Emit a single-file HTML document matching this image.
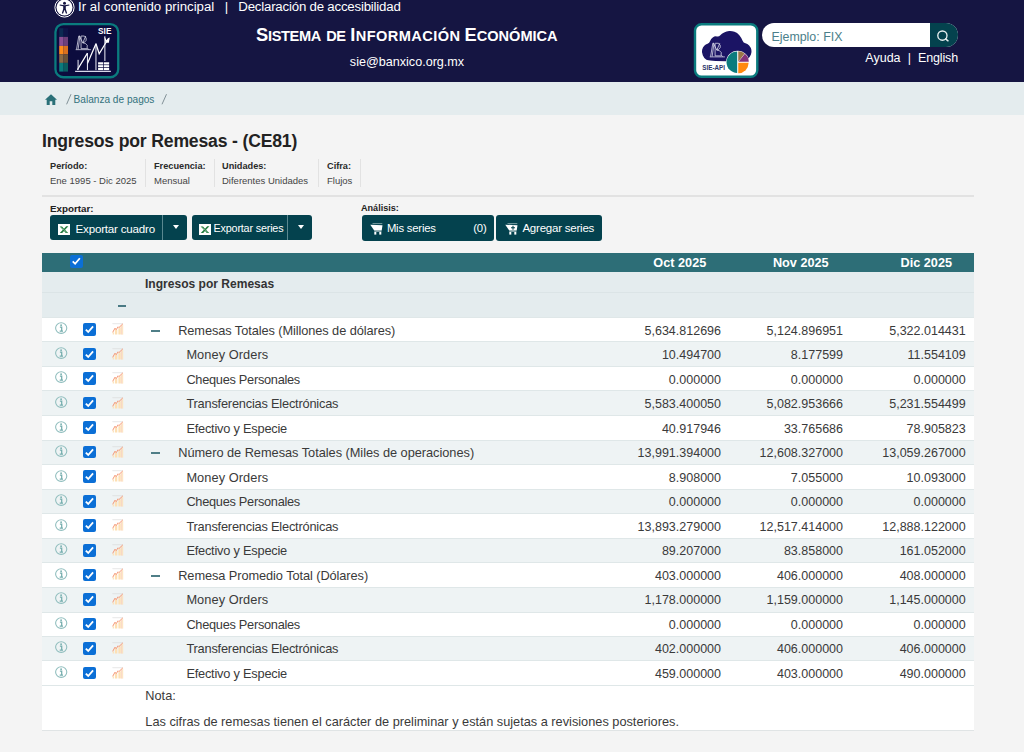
<!DOCTYPE html>
<html lang="es"><head><meta charset="utf-8"><title>SIE - Ingresos por Remesas</title>
<style>
*{box-sizing:border-box;margin:0;padding:0}
html,body{width:1024px;height:752px;overflow:hidden}
body{background:#f4f4f4;font-family:"Liberation Sans",sans-serif;color:#222;position:relative}
.abs{position:absolute}
#hdr{position:absolute;left:0;top:0;width:1024px;height:82px;background:#151542}
#hdr .t1{position:absolute;left:78px;top:-2px;font-size:13.25px;color:#fff;line-height:17px;white-space:nowrap;letter-spacing:-0.1px}
#hdr .t1 .sep{margin:0 6.5px 0 7px}
#acc{position:absolute;left:53.6px;top:-2.7px;width:21px;height:21px}
#ttl{position:absolute;left:0;top:23px;width:1024px;height:24px;color:#fff;font-weight:bold;white-space:nowrap;line-height:24px;font-size:14.6px}
#ttl .w{position:absolute;top:0;letter-spacing:0px}
#w1{left:256.1px;letter-spacing:-0.35px !important}
#w2{left:326.3px;top:1.2px !important;letter-spacing:-0.5px !important}
#w3{left:350.2px;letter-spacing:0.42px !important}
#w4{left:464.5px;letter-spacing:-0.02px !important}
#ttl b{font-size:18.3px;font-weight:bold}
#mail{position:absolute;left:207px;width:400px;top:54px;text-align:center;color:#fff;font-size:12.6px;line-height:16px}
#srch{position:absolute;left:762px;top:23px;width:196.4px;height:24.4px;border-radius:12.2px;background:#fff;overflow:hidden}
#srch .ph{position:absolute;left:9.5px;top:1.8px;line-height:25px;font-size:12.4px;color:#4b7f8a}
#srch .bt{position:absolute;right:0;top:0;width:28.4px;height:25px;background:#04424e}
#lnk{position:absolute;right:66px;top:50px;color:#fff;font-size:12.5px;line-height:16px;white-space:nowrap}
#bc{position:absolute;left:0;top:82px;width:1024px;height:33px;background:#e4ecee}
#bc .tx{position:absolute;left:73.6px;top:10.8px;font-size:10.1px;line-height:14px;color:#33727d;white-space:nowrap}
#bc .tx i{font-style:normal;color:#444;font-size:13px}
h1{position:absolute;left:42px;top:129px;font-size:17.6px;line-height:24px;color:#222;font-weight:bold;white-space:nowrap;letter-spacing:-0.17px}
.meta{position:absolute;top:159px;height:28px;font-size:9.5px;line-height:13px;color:#333;white-space:nowrap;border-right:1px solid #e2e2e2;padding-left:0}
.meta b{display:block;margin-top:0.7px;color:#2a2a2a;font-size:9.2px}
.meta span{display:block;margin-top:1.3px;color:#444}
#hr{position:absolute;left:42px;top:195px;width:932px;height:2px;background:#e2e2e2}
.lbl{position:absolute;top:202px;font-size:9.8px;font-weight:bold;line-height:13px;color:#222}
.btn{position:absolute;top:215.2px;height:25px;background:#04424e;color:#fff;font-size:11.6px;letter-spacing:-0.2px;line-height:27px;border-radius:3px;white-space:nowrap}
.sepb{position:absolute;top:215.2px;height:24.5px;background:#5a8890}
.btn svg{position:absolute}
.caret{position:absolute;left:9.9px;top:10px;width:0;height:0;border-left:3.4px solid transparent;border-right:3.4px solid transparent;border-top:4.3px solid #fff}
#tbl{position:absolute;left:42px;top:253px;width:932px;height:478px;background:#fff}
#th{position:absolute;left:0;top:0;width:932px;height:19px;background:#2d6e77;color:#fff;font-weight:bold;font-size:12.7px;line-height:20px}
#th span{position:absolute;top:0;width:110px;text-align:center}
.g{position:absolute;left:0;width:932px;background:#e4ecee;border-bottom:1px solid #dbe4e6}
.r{position:absolute;left:0;width:932px;background:#fff;font-size:12.8px;color:#3a3a3a;border-top:1px solid #dfe7e8;white-space:nowrap}
.r.odd{background:#eef3f4}
.ic{position:absolute;left:0;width:0;height:0}
.r .inf{position:absolute;left:12.7px;top:-0.8px;width:13px;height:12.4px}
.r .cb,.cb{position:absolute;left:41.2px;top:0px;width:12.6px;height:12.6px;background:#0b6fd6;border-radius:2px}
.cb svg{position:absolute;left:0;top:0;width:100%;height:100%}
.r .ch{position:absolute;left:69.8px;top:-0.1px;width:12px;height:12px}
.r .mn{position:absolute;left:109.3px;width:8.3px;height:2px;background:#4f7e87}
.r .nm{position:absolute;top:0}
.r .v{position:absolute;top:0;text-align:right;font-size:12.5px}
.note{position:absolute;left:103.3px;font-size:12.75px;color:#3a3a3a;line-height:16px;white-space:nowrap}
</style></head><body>
<div id="hdr">
<svg id="acc" viewBox="0 0 21 21"><circle cx="10.5" cy="10.5" r="9.6" fill="none" stroke="#fff" stroke-width="1"/><circle cx="10.5" cy="10.5" r="8" fill="#fff"/><circle cx="10.5" cy="6.3" r="1.5" fill="#151542"/><path d="M5.6 8.6l3.6.7v2.6l-1.4 4.4 1.2.4 1.5-4 1.5 4 1.2-.4-1.4-4.4V9.300l3.600-.7-.2-1.100-4.700.8-4.700-.8z" fill="#151542"/></svg>
<div class="t1"><span style="letter-spacing:0px">Ir al contenido principal</span><span class="sep">&nbsp;|&nbsp;</span><span style="letter-spacing:-0.2px">Declaración de accesibilidad</span></div>
<svg id="logo" viewBox="54 22 66 57" width="66" height="57" style="position:absolute;left:54px;top:22px"><rect x="55.45" y="24.05" width="62.8" height="53.2" rx="8" fill="#0c0c3e" stroke="#0a7b7e" stroke-width="2.3"/><rect x="59.2" y="28.2" width="4.4" height="8.70" fill="#0c2a52"/><rect x="63.6" y="28.2" width="4.4" height="8.70" fill="#0e1448"/><rect x="59.2" y="36.9" width="4.4" height="9.00" fill="#8a4f93"/><rect x="63.6" y="36.9" width="4.4" height="9.00" fill="#6d3f7a"/><rect x="59.2" y="45.9" width="4.4" height="8.50" fill="#ff8c1a"/><rect x="63.6" y="45.9" width="4.4" height="8.50" fill="#d9701f"/><rect x="59.2" y="54.4" width="4.4" height="8.50" fill="#8a6a45"/><rect x="63.6" y="54.4" width="4.4" height="8.50" fill="#6a5238"/><rect x="59.2" y="62.9" width="4.4" height="8.70" fill="#0a7a7c"/><rect x="63.6" y="62.9" width="4.4" height="8.70" fill="#0a5d60"/><text x="98.1" y="34.2" font-family="Liberation Sans" font-weight="bold" font-size="8.6" textLength="13.3" lengthAdjust="spacingAndGlyphs" fill="#fff">SIE</text><path d="M76.55 49.32 L78.77 36.04 L79.96 36.04 L78.09 49.32 M79.36 36.04 L82.77 42.85 L85.74 36.04 M81.06 36.04 L84.47 36.04 L86.17 38.00 L86.17 40.30 L84.47 42.26 L82.77 42.85 L85.32 43.36 L87.28 45.40 L87.02 47.79 L88.72 49.32 M81.06 36.30 L81.06 48.64 L87.45 48.64 M75.70 49.66 L90.85 49.66" fill="none" stroke="#e4e4f2" stroke-width="0.75"/><path d="M75.11 71.36 L110.85 71.36" stroke="#d8d8ea" stroke-width="1.1" fill="none"/><path d="M77.40 69.74 L87.45 53.06 M87.45 63.53 L95.96 43.70 M95.96 43.70 L99.19 53.74 L108.72 38.00" fill="none" stroke="#fff" stroke-width="1.25" stroke-linejoin="miter"/><path d="M78.09 59.87 L78.09 69.91 M87.45 53.06 L87.45 70.09 M95.96 43.70 L95.96 70.09 M104.89 36.30 L104.89 60.98" fill="none" stroke="#f0f0fa" stroke-width="1"/><path d="M104.30 36.30 L106.60 40.30 L109.74 37.15 L108.89 42.85 L105.49 42.85z" fill="#fff"/><rect x="98.09" y="62.26" width="5.10" height="2.21" fill="#fff"/><rect x="103.87" y="62.26" width="5.28" height="2.21" fill="#fff"/><rect x="98.09" y="65.15" width="5.10" height="2.04" fill="#fff"/><rect x="103.87" y="65.15" width="5.28" height="2.04" fill="#fff"/><rect x="98.09" y="67.87" width="5.10" height="2.22" fill="#fff"/><rect x="103.87" y="67.87" width="5.28" height="2.22" fill="#fff"/></svg>
<div id="ttl"><span class="w" id="w1"><b>S</b>ISTEMA</span><span class="w" id="w2">DE</span><span class="w" id="w3"><b>I</b>NFORMACIÓN</span><span class="w" id="w4"><b>E</b>CONÓMICA</span></div>
<div id="mail">sie@banxico.org.mx</div>
<svg id="api" viewBox="693 22 67 57" width="67" height="57" style="position:absolute;left:693px;top:22px"><rect x="695" y="24.3" width="62.3" height="52.5" rx="6.5" fill="#fff" stroke="#0a7b7e" stroke-width="2.4"/><path d="M702.77 55.23Q701.49 52.04 702.13 49.70Q702.77 47.36 704.26 45.87Q705.74 44.38 707.57 43.87Q709.40 43.36 710.13 41.11Q710.85 38.85 712.77 37.45Q714.68 36.04 716.81 36.47Q718.94 36.89 720.30 35.32Q721.66 33.74 724.13 32.47Q726.60 31.19 729.15 30.98Q731.70 30.77 734.47 31.70Q737.23 32.64 739.36 35.32Q741.49 38.00 742.47 40.43Q743.45 42.85 745.45 43.19Q747.45 43.53 749.15 45.45Q750.85 47.36 751.36 49.70Q751.87 52.04 750.94 54.60Q750.00 57.15 747.66 59.15Q745.32 61.15 727.02 61.15Q708.72 61.15 706.38 59.79Q704.04 58.43 702.77 55.23z" fill="#1b1464"/><path d="M710.60 56.55 L712.81 43.28 L714.00 43.28 L712.13 56.55 M713.40 43.28 L716.81 50.09 L719.79 43.28 M715.11 43.28 L718.51 43.28 L720.21 45.23 L720.21 47.53 L718.51 49.49 L716.81 50.09 L719.36 50.60 L721.32 52.64 L721.06 55.02 L722.77 56.55 M715.11 43.53 L715.11 55.87 L721.49 55.87 M709.74 56.89 L724.89 56.89" fill="none" stroke="#e4e4f2" stroke-width="0.75"/><circle cx="737.66" cy="62.26" r="11.54" fill="#fff"/><path d="M737.16 62.26L737.16 72.90A10.64 10.64 0 0 1 737.16 51.62z" fill="#0b7c7e"/><path d="M738.26 61.66L738.26 51.32A10.34 10.34 0 0 1 744.62 53.51z" fill="#9a7648"/><path d="M738.56 61.86L744.86 53.79A10.24 10.24 0 0 1 748.80 61.86z" fill="#85337a"/><path d="M738.26 62.86L748.60 62.86A10.34 10.34 0 0 1 738.26 73.20z" fill="#ff8a0f"/><text x="702.34" y="70.09" font-family="Liberation Sans" font-weight="bold" font-size="7.3" textLength="22.6" lengthAdjust="spacingAndGlyphs" fill="#2a3568">SIE-API</text></svg>
<div id="srch"><span class="ph">Ejemplo: FIX</span><div class="bt"><svg viewBox="0 0 14 14" width="14" height="14" style="position:absolute;left:5.8px;top:5.9px"><circle cx="6.400" cy="6.600" r="4.600" fill="none" stroke="#e8f0f0" stroke-width="1.350"/><path d="M9.600 9.900l2.400 1.900" stroke="#e8f0f0" stroke-width="1.500" stroke-linecap="round"/></svg></div></div>
<div id="lnk"><span>Ayuda</span><span style="margin:0 6.9px 0 7.3px">|</span><span style="letter-spacing:-0.14px">English</span></div>
</div>
<div id="bc"><svg viewBox="0 0 12 11" width="12" height="11" style="position:absolute;left:45.3px;top:11.8px"><path d="M6 0.300L0 5.800h1.700V11h3V7.300h2.600V11h3V5.800H12z" fill="#2a7078"/></svg>
<svg viewBox="0 0 110 14" width="110" height="14" style="position:absolute;left:62px;top:9px"><path d="M4.600 13.300L9 3.200M100 13.300L104.500 3.200" stroke="#6f7f86" stroke-width="0.850" fill="none"/></svg><div class="tx">Balanza de pagos</div></div>
<h1>Ingresos por Remesas - (CE81)</h1>
<div class="meta" style="left:50px;width:96px"><b>Período:</b><span>Ene 1995 - Dic 2025</span></div>
<div class="meta" style="left:154px;width:60.5px"><b>Frecuencia:</b><span>Mensual</span></div>
<div class="meta" style="left:222px;width:97px"><b>Unidades:</b><span>Diferentes Unidades</span></div>
<div class="meta" style="left:327px;width:34px"><b>Cifra:</b><span>Flujos</span></div>
<div id="hr"></div>
<div class="lbl" style="left:50px">Exportar:</div>
<div class="lbl" style="left:361px;font-size:9.1px">Análisis:</div>
<div class="sepb" style="left:161px;width:4px"></div><div class="sepb" style="left:286px;width:4px"></div><div class="btn" style="left:50px;width:112.200px;height:24.500px;border-radius:3px 0 0 3px"><svg viewBox="0 0 12 11" width="12" height="11" style="left:8.3px;top:8.7px"><rect x="0" y="0" width="12" height="11" fill="#fff"/><path d="M1.6 2.600L4 2.600L6 4.800L8.200 2.300L10.400 2.300L7.100 5.800L10.200 9H7.800L6 6.900L4.200 9H1.800L4.900 5.700z" fill="#1e7a3c"/><path d="M2.600 3.200L9.300 8.600" stroke="#bfe0c8" stroke-width="0.5"/></svg><span style="position:absolute;left:25.500px">Exportar cuadro</span></div>
<div class="btn" style="left:163.300px;width:23.500px;height:24.500px;border-radius:0 3px 3px 0"><div class="caret"></div></div>
<div class="btn" style="left:192px;width:95.200px;height:24.500px;border-radius:3px 0 0 3px"><svg viewBox="0 0 12 11" width="12" height="11" style="left:6.6px;top:8.7px"><rect x="0" y="0" width="12" height="11" fill="#fff"/><path d="M1.6 2.600L4 2.600L6 4.800L8.200 2.300L10.400 2.300L7.100 5.800L10.200 9H7.800L6 6.900L4.200 9H1.800L4.900 5.700z" fill="#1e7a3c"/><path d="M2.600 3.200L9.300 8.600" stroke="#bfe0c8" stroke-width="0.5"/></svg><span style="position:absolute;left:21.500px;font-size:10.800px;letter-spacing:-0.180px">Exportar series</span></div>
<div class="btn" style="left:288.300px;width:23.500px;height:24.500px;border-radius:0 3px 3px 0"><div class="caret"></div></div>
<div class="btn" style="left:361.500px;width:132.500px;height:25.500px"><svg viewBox="0 0 13 12" width="13" height="12" style="left:8.2px;top:8px"><path d="M2.500 0.600H12.300" stroke="#a9c3c7" stroke-width="0.700"/><path d="M0.300 1.700L12.500 2.200L11.700 7.400H4.200z" fill="#fff"/><path d="M4.300 8.200H11.500" stroke="#dfeaeb" stroke-width="0.800"/><rect x="4.300" y="9" width="2" height="2.600" fill="#fff"/><rect x="9.300" y="9" width="2" height="2.600" fill="#fff"/></svg><span style="position:absolute;left:25.400px;font-size:11.300px;letter-spacing:-0.200px">Mis series</span><span style="position:absolute;right:7.500px;font-size:11.300px">(0)</span></div>
<div class="btn" style="left:496.400px;width:105.500px;height:25.500px"><svg viewBox="0 0 13 12" width="13" height="12" style="left:8.4px;top:8px"><path d="M2.500 0.600H12.300" stroke="#a9c3c7" stroke-width="0.700"/><path d="M0.300 1.700L12.500 2.200L11.700 7.400H4.200z" fill="#fff"/><path d="M4.300 8.200H11.500" stroke="#dfeaeb" stroke-width="0.800"/><rect x="4.300" y="9" width="2" height="2.600" fill="#fff"/><rect x="9.300" y="9" width="2" height="2.600" fill="#fff"/><path d="M8 2.800v4M6 4.800h4" stroke="#04424e" stroke-width="1.100"/></svg><span style="position:absolute;left:26px;font-size:11.500px;letter-spacing:-0.220px">Agregar series</span></div>
<div id="tbl">
<div id="th"><span class="cb" style="left:28.3px;top:2.3px;width:12.3px;height:12.3px"><svg viewBox="0 0 13 13"><path d="M2.900 6.800l2.500 2.500L10.400 3.400" fill="none" stroke="#fff" stroke-width="1.900"/></svg></span><span style="left:582.8px">Oct 2025</span><span style="left:703.8px">Nov 2025</span><span style="left:829.3px">Dic 2025</span></div>
<div class="g" style="top:19px;height:21px"><span style="position:absolute;left:103px;top:3.500px;font-size:12.050px;font-weight:bold;color:#333;line-height:16px;white-space:nowrap">Ingresos por Remesas</span></div>
<div class="g" style="top:40px;height:24px;border-bottom:none"><span style="position:absolute;left:75.800px;top:11.900px;width:8.400px;height:1.900px;background:#4a7a84"></span></div>
<div class="r" style="top:64px;height:24px;line-height:16px"><span class="ic" style="top:5.20px"><svg class="inf" viewBox="0 0 13 12.4"><ellipse cx="6.2" cy="6.1" rx="5.6" ry="5.3" fill="none" stroke="#8fbdbd" stroke-width="1.05"/><path d="M4.900 5.100h1.800v4M4.700 9.200h3.300" fill="none" stroke="#74adad" stroke-width="1.250"/><circle cx="6.100" cy="3.200" r="0.850" fill="#74adad"/></svg><span class="cb"><svg viewBox="0 0 13 13"><path d="M2.900 6.800l2.500 2.500L10.400 3.400" fill="none" stroke="#fff" stroke-width="1.900"/></svg></span><svg class="ch" viewBox="0 0 12 12"><path d="M0.400 0.700h10.400" stroke="#d6d6d6" stroke-width="0.600" fill="none"/><path d="M1.300 11.600V9.200M3.500 11.600V6.500M4.700 11.600V6.800M7 11.600V5.200M8.200 11.600V4.200" fill="none" stroke="#fde0b4" stroke-width="1.200"/><path d="M9.700 11.600V2.800" fill="none" stroke="#f9cdb4" stroke-width="0.900"/><path d="M10.700 11.600V1.800" fill="none" stroke="#fde0b4" stroke-width="0.900"/><path d="M0.700 9.300L3 5.200l1.200 1.500L6.100 3.800l0.800 0.800L10.800 0.900" fill="none" stroke="#f4926f" stroke-width="0.950"/></svg></span><span class="mn" style="top:12px"></span><span class="nm" style="top:5px;left:136.2px;letter-spacing:-0.089px">Remesas Totales (Millones de dólares)</span><span class="v" style="top:5px;right:253.0px">5,634.812696</span><span class="v" style="top:5px;right:131.0px">5,124.896951</span><span class="v" style="top:5px;right:8.3px">5,322.014431</span></div>
<div class="r odd" style="top:88px;height:25px;line-height:16px"><span class="ic" style="top:5.73px"><svg class="inf" viewBox="0 0 13 12.4"><ellipse cx="6.2" cy="6.1" rx="5.6" ry="5.3" fill="none" stroke="#8fbdbd" stroke-width="1.05"/><path d="M4.900 5.100h1.800v4M4.700 9.200h3.300" fill="none" stroke="#74adad" stroke-width="1.250"/><circle cx="6.100" cy="3.200" r="0.850" fill="#74adad"/></svg><span class="cb"><svg viewBox="0 0 13 13"><path d="M2.900 6.800l2.500 2.500L10.400 3.400" fill="none" stroke="#fff" stroke-width="1.900"/></svg></span><svg class="ch" viewBox="0 0 12 12"><path d="M0.400 0.700h10.400" stroke="#d6d6d6" stroke-width="0.600" fill="none"/><path d="M1.300 11.600V9.200M3.500 11.600V6.500M4.700 11.600V6.800M7 11.600V5.200M8.200 11.600V4.200" fill="none" stroke="#fde0b4" stroke-width="1.200"/><path d="M9.700 11.600V2.800" fill="none" stroke="#f9cdb4" stroke-width="0.900"/><path d="M10.700 11.600V1.800" fill="none" stroke="#fde0b4" stroke-width="0.900"/><path d="M0.700 9.300L3 5.200l1.200 1.500L6.100 3.800l0.800 0.800L10.800 0.900" fill="none" stroke="#f4926f" stroke-width="0.950"/></svg></span><span class="nm" style="top:5px;left:144.4px;letter-spacing:0.067px">Money Orders</span><span class="v" style="top:5px;right:253.0px">10.494700</span><span class="v" style="top:5px;right:131.0px">8.177599</span><span class="v" style="top:5px;right:8.3px">11.554109</span></div>
<div class="r" style="top:113px;height:24px;line-height:16px"><span class="ic" style="top:5.26px"><svg class="inf" viewBox="0 0 13 12.4"><ellipse cx="6.2" cy="6.1" rx="5.6" ry="5.3" fill="none" stroke="#8fbdbd" stroke-width="1.05"/><path d="M4.900 5.100h1.800v4M4.700 9.200h3.300" fill="none" stroke="#74adad" stroke-width="1.250"/><circle cx="6.100" cy="3.200" r="0.850" fill="#74adad"/></svg><span class="cb"><svg viewBox="0 0 13 13"><path d="M2.900 6.800l2.500 2.500L10.400 3.400" fill="none" stroke="#fff" stroke-width="1.900"/></svg></span><svg class="ch" viewBox="0 0 12 12"><path d="M0.400 0.700h10.400" stroke="#d6d6d6" stroke-width="0.600" fill="none"/><path d="M1.300 11.600V9.200M3.500 11.600V6.500M4.700 11.600V6.800M7 11.600V5.200M8.200 11.600V4.200" fill="none" stroke="#fde0b4" stroke-width="1.200"/><path d="M9.700 11.600V2.800" fill="none" stroke="#f9cdb4" stroke-width="0.900"/><path d="M10.700 11.600V1.800" fill="none" stroke="#fde0b4" stroke-width="0.900"/><path d="M0.700 9.300L3 5.200l1.200 1.500L6.100 3.800l0.800 0.800L10.800 0.900" fill="none" stroke="#f4926f" stroke-width="0.950"/></svg></span><span class="nm" style="top:5px;left:144.4px;letter-spacing:-0.291px">Cheques Personales</span><span class="v" style="top:5px;right:253.0px">0.000000</span><span class="v" style="top:5px;right:131.0px">0.000000</span><span class="v" style="top:5px;right:8.3px">0.000000</span></div>
<div class="r odd" style="top:137px;height:25px;line-height:16px"><span class="ic" style="top:5.79px"><svg class="inf" viewBox="0 0 13 12.4"><ellipse cx="6.2" cy="6.1" rx="5.6" ry="5.3" fill="none" stroke="#8fbdbd" stroke-width="1.05"/><path d="M4.900 5.100h1.800v4M4.700 9.200h3.300" fill="none" stroke="#74adad" stroke-width="1.250"/><circle cx="6.100" cy="3.200" r="0.850" fill="#74adad"/></svg><span class="cb"><svg viewBox="0 0 13 13"><path d="M2.900 6.800l2.500 2.500L10.400 3.400" fill="none" stroke="#fff" stroke-width="1.900"/></svg></span><svg class="ch" viewBox="0 0 12 12"><path d="M0.400 0.700h10.400" stroke="#d6d6d6" stroke-width="0.600" fill="none"/><path d="M1.300 11.600V9.200M3.500 11.600V6.500M4.700 11.600V6.800M7 11.600V5.200M8.200 11.600V4.200" fill="none" stroke="#fde0b4" stroke-width="1.200"/><path d="M9.700 11.600V2.800" fill="none" stroke="#f9cdb4" stroke-width="0.900"/><path d="M10.700 11.600V1.800" fill="none" stroke="#fde0b4" stroke-width="0.900"/><path d="M0.700 9.300L3 5.200l1.200 1.500L6.100 3.800l0.800 0.800L10.800 0.900" fill="none" stroke="#f4926f" stroke-width="0.950"/></svg></span><span class="nm" style="top:5px;left:144.4px;letter-spacing:-0.206px">Transferencias Electrónicas</span><span class="v" style="top:5px;right:253.0px">5,583.400050</span><span class="v" style="top:5px;right:131.0px">5,082.953666</span><span class="v" style="top:5px;right:8.3px">5,231.554499</span></div>
<div class="r" style="top:162px;height:25px;line-height:16px"><span class="ic" style="top:5.32px"><svg class="inf" viewBox="0 0 13 12.4"><ellipse cx="6.2" cy="6.1" rx="5.6" ry="5.3" fill="none" stroke="#8fbdbd" stroke-width="1.05"/><path d="M4.900 5.100h1.800v4M4.700 9.200h3.300" fill="none" stroke="#74adad" stroke-width="1.250"/><circle cx="6.100" cy="3.200" r="0.850" fill="#74adad"/></svg><span class="cb"><svg viewBox="0 0 13 13"><path d="M2.900 6.800l2.500 2.500L10.400 3.400" fill="none" stroke="#fff" stroke-width="1.900"/></svg></span><svg class="ch" viewBox="0 0 12 12"><path d="M0.400 0.700h10.400" stroke="#d6d6d6" stroke-width="0.600" fill="none"/><path d="M1.300 11.600V9.200M3.500 11.600V6.500M4.700 11.600V6.800M7 11.600V5.200M8.200 11.600V4.200" fill="none" stroke="#fde0b4" stroke-width="1.200"/><path d="M9.700 11.600V2.800" fill="none" stroke="#f9cdb4" stroke-width="0.900"/><path d="M10.700 11.600V1.800" fill="none" stroke="#fde0b4" stroke-width="0.900"/><path d="M0.700 9.300L3 5.200l1.200 1.500L6.100 3.800l0.800 0.800L10.800 0.900" fill="none" stroke="#f4926f" stroke-width="0.950"/></svg></span><span class="nm" style="top:5px;left:144.4px;letter-spacing:-0.221px">Efectivo y Especie</span><span class="v" style="top:5px;right:253.0px">40.917946</span><span class="v" style="top:5px;right:131.0px">33.765686</span><span class="v" style="top:5px;right:8.3px">78.905823</span></div>
<div class="r odd" style="top:187px;height:24px;line-height:16px"><span class="ic" style="top:4.85px"><svg class="inf" viewBox="0 0 13 12.4"><ellipse cx="6.2" cy="6.1" rx="5.6" ry="5.3" fill="none" stroke="#8fbdbd" stroke-width="1.05"/><path d="M4.900 5.100h1.800v4M4.700 9.200h3.300" fill="none" stroke="#74adad" stroke-width="1.250"/><circle cx="6.100" cy="3.200" r="0.850" fill="#74adad"/></svg><span class="cb"><svg viewBox="0 0 13 13"><path d="M2.900 6.800l2.500 2.500L10.400 3.400" fill="none" stroke="#fff" stroke-width="1.900"/></svg></span><svg class="ch" viewBox="0 0 12 12"><path d="M0.400 0.700h10.400" stroke="#d6d6d6" stroke-width="0.600" fill="none"/><path d="M1.300 11.600V9.200M3.500 11.600V6.500M4.700 11.600V6.800M7 11.600V5.200M8.200 11.600V4.200" fill="none" stroke="#fde0b4" stroke-width="1.200"/><path d="M9.700 11.600V2.800" fill="none" stroke="#f9cdb4" stroke-width="0.900"/><path d="M10.700 11.600V1.800" fill="none" stroke="#fde0b4" stroke-width="0.900"/><path d="M0.700 9.300L3 5.200l1.200 1.500L6.100 3.800l0.800 0.800L10.800 0.900" fill="none" stroke="#f4926f" stroke-width="0.950"/></svg></span><span class="mn" style="top:11px"></span><span class="nm" style="top:4px;left:136.2px;letter-spacing:-0.039px">Número de Remesas Totales (Miles de operaciones)</span><span class="v" style="top:4px;right:253.0px">13,991.394000</span><span class="v" style="top:4px;right:131.0px">12,608.327000</span><span class="v" style="top:4px;right:8.3px">13,059.267000</span></div>
<div class="r" style="top:211px;height:25px;line-height:16px"><span class="ic" style="top:5.38px"><svg class="inf" viewBox="0 0 13 12.4"><ellipse cx="6.2" cy="6.1" rx="5.6" ry="5.3" fill="none" stroke="#8fbdbd" stroke-width="1.05"/><path d="M4.900 5.100h1.800v4M4.700 9.200h3.300" fill="none" stroke="#74adad" stroke-width="1.250"/><circle cx="6.100" cy="3.200" r="0.850" fill="#74adad"/></svg><span class="cb"><svg viewBox="0 0 13 13"><path d="M2.900 6.800l2.500 2.500L10.400 3.400" fill="none" stroke="#fff" stroke-width="1.900"/></svg></span><svg class="ch" viewBox="0 0 12 12"><path d="M0.400 0.700h10.400" stroke="#d6d6d6" stroke-width="0.600" fill="none"/><path d="M1.300 11.600V9.200M3.500 11.600V6.500M4.700 11.600V6.800M7 11.600V5.200M8.200 11.600V4.200" fill="none" stroke="#fde0b4" stroke-width="1.200"/><path d="M9.700 11.600V2.800" fill="none" stroke="#f9cdb4" stroke-width="0.900"/><path d="M10.700 11.600V1.800" fill="none" stroke="#fde0b4" stroke-width="0.900"/><path d="M0.700 9.300L3 5.200l1.200 1.500L6.100 3.800l0.800 0.800L10.800 0.900" fill="none" stroke="#f4926f" stroke-width="0.950"/></svg></span><span class="nm" style="top:5px;left:144.4px;letter-spacing:0.067px">Money Orders</span><span class="v" style="top:5px;right:253.0px">8.908000</span><span class="v" style="top:5px;right:131.0px">7.055000</span><span class="v" style="top:5px;right:8.3px">10.093000</span></div>
<div class="r odd" style="top:236px;height:24px;line-height:16px"><span class="ic" style="top:4.91px"><svg class="inf" viewBox="0 0 13 12.4"><ellipse cx="6.2" cy="6.1" rx="5.6" ry="5.3" fill="none" stroke="#8fbdbd" stroke-width="1.05"/><path d="M4.900 5.100h1.800v4M4.700 9.200h3.300" fill="none" stroke="#74adad" stroke-width="1.250"/><circle cx="6.100" cy="3.200" r="0.850" fill="#74adad"/></svg><span class="cb"><svg viewBox="0 0 13 13"><path d="M2.900 6.800l2.500 2.500L10.400 3.400" fill="none" stroke="#fff" stroke-width="1.900"/></svg></span><svg class="ch" viewBox="0 0 12 12"><path d="M0.400 0.700h10.400" stroke="#d6d6d6" stroke-width="0.600" fill="none"/><path d="M1.300 11.600V9.200M3.500 11.600V6.500M4.700 11.600V6.800M7 11.600V5.200M8.200 11.600V4.200" fill="none" stroke="#fde0b4" stroke-width="1.200"/><path d="M9.700 11.600V2.800" fill="none" stroke="#f9cdb4" stroke-width="0.900"/><path d="M10.700 11.600V1.800" fill="none" stroke="#fde0b4" stroke-width="0.900"/><path d="M0.700 9.300L3 5.200l1.200 1.500L6.100 3.800l0.800 0.800L10.800 0.900" fill="none" stroke="#f4926f" stroke-width="0.950"/></svg></span><span class="nm" style="top:4px;left:144.4px;letter-spacing:-0.291px">Cheques Personales</span><span class="v" style="top:4px;right:253.0px">0.000000</span><span class="v" style="top:4px;right:131.0px">0.000000</span><span class="v" style="top:4px;right:8.3px">0.000000</span></div>
<div class="r" style="top:260px;height:25px;line-height:16px"><span class="ic" style="top:5.44px"><svg class="inf" viewBox="0 0 13 12.4"><ellipse cx="6.2" cy="6.1" rx="5.6" ry="5.3" fill="none" stroke="#8fbdbd" stroke-width="1.05"/><path d="M4.900 5.100h1.800v4M4.700 9.200h3.300" fill="none" stroke="#74adad" stroke-width="1.250"/><circle cx="6.100" cy="3.200" r="0.850" fill="#74adad"/></svg><span class="cb"><svg viewBox="0 0 13 13"><path d="M2.900 6.800l2.500 2.500L10.400 3.400" fill="none" stroke="#fff" stroke-width="1.900"/></svg></span><svg class="ch" viewBox="0 0 12 12"><path d="M0.400 0.700h10.400" stroke="#d6d6d6" stroke-width="0.600" fill="none"/><path d="M1.300 11.600V9.200M3.500 11.600V6.500M4.700 11.600V6.800M7 11.600V5.200M8.200 11.600V4.200" fill="none" stroke="#fde0b4" stroke-width="1.200"/><path d="M9.700 11.600V2.800" fill="none" stroke="#f9cdb4" stroke-width="0.900"/><path d="M10.700 11.600V1.800" fill="none" stroke="#fde0b4" stroke-width="0.900"/><path d="M0.700 9.300L3 5.200l1.200 1.500L6.100 3.800l0.800 0.800L10.800 0.900" fill="none" stroke="#f4926f" stroke-width="0.950"/></svg></span><span class="nm" style="top:5px;left:144.4px;letter-spacing:-0.206px">Transferencias Electrónicas</span><span class="v" style="top:5px;right:253.0px">13,893.279000</span><span class="v" style="top:5px;right:131.0px">12,517.414000</span><span class="v" style="top:5px;right:8.3px">12,888.122000</span></div>
<div class="r odd" style="top:285px;height:24px;line-height:16px"><span class="ic" style="top:4.97px"><svg class="inf" viewBox="0 0 13 12.4"><ellipse cx="6.2" cy="6.1" rx="5.6" ry="5.3" fill="none" stroke="#8fbdbd" stroke-width="1.05"/><path d="M4.900 5.100h1.800v4M4.700 9.200h3.300" fill="none" stroke="#74adad" stroke-width="1.250"/><circle cx="6.100" cy="3.200" r="0.850" fill="#74adad"/></svg><span class="cb"><svg viewBox="0 0 13 13"><path d="M2.900 6.800l2.500 2.500L10.400 3.400" fill="none" stroke="#fff" stroke-width="1.900"/></svg></span><svg class="ch" viewBox="0 0 12 12"><path d="M0.400 0.700h10.400" stroke="#d6d6d6" stroke-width="0.600" fill="none"/><path d="M1.300 11.600V9.200M3.500 11.600V6.500M4.700 11.600V6.800M7 11.600V5.200M8.200 11.600V4.200" fill="none" stroke="#fde0b4" stroke-width="1.200"/><path d="M9.700 11.600V2.800" fill="none" stroke="#f9cdb4" stroke-width="0.900"/><path d="M10.700 11.600V1.800" fill="none" stroke="#fde0b4" stroke-width="0.900"/><path d="M0.700 9.300L3 5.200l1.200 1.500L6.100 3.800l0.800 0.800L10.800 0.900" fill="none" stroke="#f4926f" stroke-width="0.950"/></svg></span><span class="nm" style="top:4px;left:144.4px;letter-spacing:-0.221px">Efectivo y Especie</span><span class="v" style="top:4px;right:253.0px">89.207000</span><span class="v" style="top:4px;right:131.0px">83.858000</span><span class="v" style="top:4px;right:8.3px">161.052000</span></div>
<div class="r" style="top:309px;height:25px;line-height:16px"><span class="ic" style="top:5.50px"><svg class="inf" viewBox="0 0 13 12.4"><ellipse cx="6.2" cy="6.1" rx="5.6" ry="5.3" fill="none" stroke="#8fbdbd" stroke-width="1.05"/><path d="M4.900 5.100h1.800v4M4.700 9.200h3.300" fill="none" stroke="#74adad" stroke-width="1.250"/><circle cx="6.100" cy="3.200" r="0.850" fill="#74adad"/></svg><span class="cb"><svg viewBox="0 0 13 13"><path d="M2.900 6.800l2.500 2.500L10.400 3.400" fill="none" stroke="#fff" stroke-width="1.900"/></svg></span><svg class="ch" viewBox="0 0 12 12"><path d="M0.400 0.700h10.400" stroke="#d6d6d6" stroke-width="0.600" fill="none"/><path d="M1.300 11.600V9.200M3.500 11.600V6.500M4.700 11.600V6.800M7 11.600V5.200M8.200 11.600V4.200" fill="none" stroke="#fde0b4" stroke-width="1.200"/><path d="M9.700 11.600V2.800" fill="none" stroke="#f9cdb4" stroke-width="0.900"/><path d="M10.700 11.600V1.800" fill="none" stroke="#fde0b4" stroke-width="0.900"/><path d="M0.700 9.300L3 5.200l1.200 1.500L6.100 3.800l0.800 0.800L10.800 0.900" fill="none" stroke="#f4926f" stroke-width="0.950"/></svg></span><span class="mn" style="top:12px"></span><span class="nm" style="top:5px;left:136.2px;letter-spacing:-0.085px">Remesa Promedio Total (Dólares)</span><span class="v" style="top:5px;right:253.0px">403.000000</span><span class="v" style="top:5px;right:131.0px">406.000000</span><span class="v" style="top:5px;right:8.3px">408.000000</span></div>
<div class="r odd" style="top:334px;height:25px;line-height:16px"><span class="ic" style="top:5.03px"><svg class="inf" viewBox="0 0 13 12.4"><ellipse cx="6.2" cy="6.1" rx="5.6" ry="5.3" fill="none" stroke="#8fbdbd" stroke-width="1.05"/><path d="M4.900 5.100h1.800v4M4.700 9.200h3.300" fill="none" stroke="#74adad" stroke-width="1.250"/><circle cx="6.100" cy="3.200" r="0.850" fill="#74adad"/></svg><span class="cb"><svg viewBox="0 0 13 13"><path d="M2.900 6.800l2.500 2.500L10.400 3.400" fill="none" stroke="#fff" stroke-width="1.900"/></svg></span><svg class="ch" viewBox="0 0 12 12"><path d="M0.400 0.700h10.400" stroke="#d6d6d6" stroke-width="0.600" fill="none"/><path d="M1.300 11.600V9.200M3.500 11.600V6.500M4.700 11.600V6.800M7 11.600V5.200M8.200 11.600V4.200" fill="none" stroke="#fde0b4" stroke-width="1.200"/><path d="M9.700 11.600V2.800" fill="none" stroke="#f9cdb4" stroke-width="0.900"/><path d="M10.700 11.600V1.800" fill="none" stroke="#fde0b4" stroke-width="0.900"/><path d="M0.700 9.300L3 5.200l1.200 1.500L6.100 3.800l0.800 0.800L10.800 0.900" fill="none" stroke="#f4926f" stroke-width="0.950"/></svg></span><span class="nm" style="top:4px;left:144.4px;letter-spacing:0.067px">Money Orders</span><span class="v" style="top:4px;right:253.0px">1,178.000000</span><span class="v" style="top:4px;right:131.0px">1,159.000000</span><span class="v" style="top:4px;right:8.3px">1,145.000000</span></div>
<div class="r" style="top:359px;height:24px;line-height:16px"><span class="ic" style="top:4.56px"><svg class="inf" viewBox="0 0 13 12.4"><ellipse cx="6.2" cy="6.1" rx="5.6" ry="5.3" fill="none" stroke="#8fbdbd" stroke-width="1.05"/><path d="M4.900 5.100h1.800v4M4.700 9.200h3.300" fill="none" stroke="#74adad" stroke-width="1.250"/><circle cx="6.100" cy="3.200" r="0.850" fill="#74adad"/></svg><span class="cb"><svg viewBox="0 0 13 13"><path d="M2.900 6.800l2.500 2.500L10.400 3.400" fill="none" stroke="#fff" stroke-width="1.900"/></svg></span><svg class="ch" viewBox="0 0 12 12"><path d="M0.400 0.700h10.400" stroke="#d6d6d6" stroke-width="0.600" fill="none"/><path d="M1.300 11.600V9.200M3.500 11.600V6.500M4.700 11.600V6.800M7 11.600V5.200M8.200 11.600V4.200" fill="none" stroke="#fde0b4" stroke-width="1.200"/><path d="M9.700 11.600V2.800" fill="none" stroke="#f9cdb4" stroke-width="0.900"/><path d="M10.700 11.600V1.800" fill="none" stroke="#fde0b4" stroke-width="0.900"/><path d="M0.700 9.300L3 5.200l1.200 1.500L6.100 3.800l0.800 0.800L10.800 0.900" fill="none" stroke="#f4926f" stroke-width="0.950"/></svg></span><span class="nm" style="top:4px;left:144.4px;letter-spacing:-0.291px">Cheques Personales</span><span class="v" style="top:4px;right:253.0px">0.000000</span><span class="v" style="top:4px;right:131.0px">0.000000</span><span class="v" style="top:4px;right:8.3px">0.000000</span></div>
<div class="r odd" style="top:383px;height:24px;line-height:16px"><span class="ic" style="top:5.09px"><svg class="inf" viewBox="0 0 13 12.4"><ellipse cx="6.2" cy="6.1" rx="5.6" ry="5.3" fill="none" stroke="#8fbdbd" stroke-width="1.05"/><path d="M4.900 5.100h1.800v4M4.700 9.200h3.300" fill="none" stroke="#74adad" stroke-width="1.250"/><circle cx="6.100" cy="3.200" r="0.850" fill="#74adad"/></svg><span class="cb"><svg viewBox="0 0 13 13"><path d="M2.900 6.800l2.500 2.500L10.400 3.400" fill="none" stroke="#fff" stroke-width="1.900"/></svg></span><svg class="ch" viewBox="0 0 12 12"><path d="M0.400 0.700h10.400" stroke="#d6d6d6" stroke-width="0.600" fill="none"/><path d="M1.300 11.600V9.200M3.500 11.600V6.500M4.700 11.600V6.800M7 11.600V5.200M8.200 11.600V4.200" fill="none" stroke="#fde0b4" stroke-width="1.200"/><path d="M9.700 11.600V2.800" fill="none" stroke="#f9cdb4" stroke-width="0.900"/><path d="M10.700 11.600V1.800" fill="none" stroke="#fde0b4" stroke-width="0.900"/><path d="M0.700 9.300L3 5.200l1.200 1.500L6.100 3.800l0.800 0.800L10.800 0.900" fill="none" stroke="#f4926f" stroke-width="0.950"/></svg></span><span class="nm" style="top:4px;left:144.4px;letter-spacing:-0.206px">Transferencias Electrónicas</span><span class="v" style="top:4px;right:253.0px">402.000000</span><span class="v" style="top:4px;right:131.0px">406.000000</span><span class="v" style="top:4px;right:8.3px">406.000000</span></div>
<div class="r" style="top:407px;height:25px;line-height:16px"><span class="ic" style="top:5.62px"><svg class="inf" viewBox="0 0 13 12.4"><ellipse cx="6.2" cy="6.1" rx="5.6" ry="5.3" fill="none" stroke="#8fbdbd" stroke-width="1.05"/><path d="M4.900 5.100h1.800v4M4.700 9.200h3.300" fill="none" stroke="#74adad" stroke-width="1.250"/><circle cx="6.100" cy="3.200" r="0.850" fill="#74adad"/></svg><span class="cb"><svg viewBox="0 0 13 13"><path d="M2.900 6.800l2.500 2.500L10.400 3.400" fill="none" stroke="#fff" stroke-width="1.900"/></svg></span><svg class="ch" viewBox="0 0 12 12"><path d="M0.400 0.700h10.400" stroke="#d6d6d6" stroke-width="0.600" fill="none"/><path d="M1.300 11.600V9.200M3.500 11.600V6.500M4.700 11.600V6.800M7 11.600V5.200M8.200 11.600V4.200" fill="none" stroke="#fde0b4" stroke-width="1.200"/><path d="M9.700 11.600V2.800" fill="none" stroke="#f9cdb4" stroke-width="0.900"/><path d="M10.700 11.600V1.800" fill="none" stroke="#fde0b4" stroke-width="0.900"/><path d="M0.700 9.300L3 5.200l1.200 1.500L6.100 3.800l0.800 0.800L10.800 0.900" fill="none" stroke="#f4926f" stroke-width="0.950"/></svg></span><span class="nm" style="top:5px;left:144.4px;letter-spacing:-0.221px">Efectivo y Especie</span><span class="v" style="top:5px;right:253.0px">459.000000</span><span class="v" style="top:5px;right:131.0px">403.000000</span><span class="v" style="top:5px;right:8.3px">490.000000</span></div>
<div class="r" style="top:432px;height:22px"><span class="note" style="top:2px">Nota:</span></div>
<div class="r" style="top:454px;height:24px;border-top:none;border-bottom:1px solid #e0e4e5"><span class="note" style="top:7px">Las cifras de remesas tienen el carácter de preliminar y están sujetas a revisiones posteriores.</span></div>
</div>
</body></html>
